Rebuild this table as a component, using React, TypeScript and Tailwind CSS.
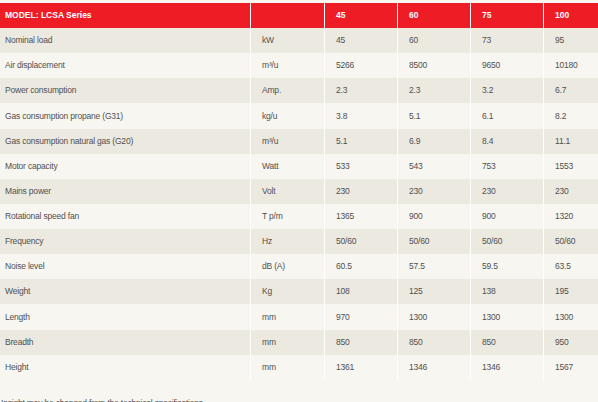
import React from "react";

const rows: [string, React.ReactNode, string, string, string, string][] = [
  ["Nominal load", "kW", "45", "60", "73", "95"],
  ["Air displacement", <>m³/u</>, "5266", "8500", "9650", "10180"],
  ["Power consumption", "Amp.", "2.3", "2.3", "3.2", "6.7"],
  ["Gas consumption propane (G31)", "kg/u", "3.8", "5.1", "6.1", "8.2"],
  ["Gas consumption natural gas (G20)", <>m³/u</>, "5.1", "6.9", "8.4", "11.1"],
  ["Motor capacity", "Watt", "533", "543", "753", "1553"],
  ["Mains power", "Volt", "230", "230", "230", "230"],
  ["Rotational speed fan", "T p/m", "1365", "900", "900", "1320"],
  ["Frequency", "Hz", "50/60", "50/60", "50/60", "50/60"],
  ["Noise level", "dB (A)", "60.5", "57.5", "59.5", "63.5"],
  ["Weight", "Kg", "108", "125", "138", "195"],
  ["Length", "mm", "970", "1300", "1300", "1300"],
  ["Breadth", "mm", "850", "850", "850", "950"],
  ["Height", "mm", "1361", "1346", "1346", "1567"],
];

export default function App() {
  return (
    <div
      className="w-[598px] h-[402px] overflow-hidden bg-[#f8f6f1] pt-[3px]"
      style={{ fontFamily: '"Liberation Sans", Arial, sans-serif' }}
    >
      <div className="flex h-[25px] bg-[#ee1c25] text-white text-[8.5px] font-bold">
        <div className="w-[250px] pl-[5px] flex items-center">MODEL: LCSA Series</div>
        <div className="w-[74px] border-l border-white" />
        <div className="w-[73px] border-l border-white pl-[11px] flex items-center">45</div>
        <div className="w-[73px] border-l border-white pl-[11px] flex items-center">60</div>
        <div className="w-[73px] border-l border-white pl-[11px] flex items-center">75</div>
        <div className="flex-1 border-l border-white pl-[11px] flex items-center">100</div>
      </div>
      {rows.map((r, i) => (
        <div
          key={i}
          className={`flex h-[25.14px] text-[8.5px] tracking-[-0.2px] text-[#505050] ${i % 2 === 0 ? "bg-[#ece9e1]" : "bg-[#f8f6f1]"}`}
        >
          <div className="w-[250px] pl-[5px] flex items-center">{r[0]}</div>
          <div className="w-[74px] border-l border-white pl-[11px] flex items-center">{r[1]}</div>
          <div className="w-[73px] border-l border-white pl-[11px] flex items-center">{r[2]}</div>
          <div className="w-[73px] border-l border-white pl-[11px] flex items-center">{r[3]}</div>
          <div className="w-[73px] border-l border-white pl-[11px] flex items-center">{r[4]}</div>
          <div className="flex-1 border-l border-white pl-[11px] flex items-center">{r[5]}</div>
        </div>
      ))}
      <div className="pl-[1px] mt-[18px] text-[8.5px] tracking-[-0.2px] leading-[10px] text-[#505050]">
        Insight may be changed from the technical specifications
      </div>
    </div>
  );
}
